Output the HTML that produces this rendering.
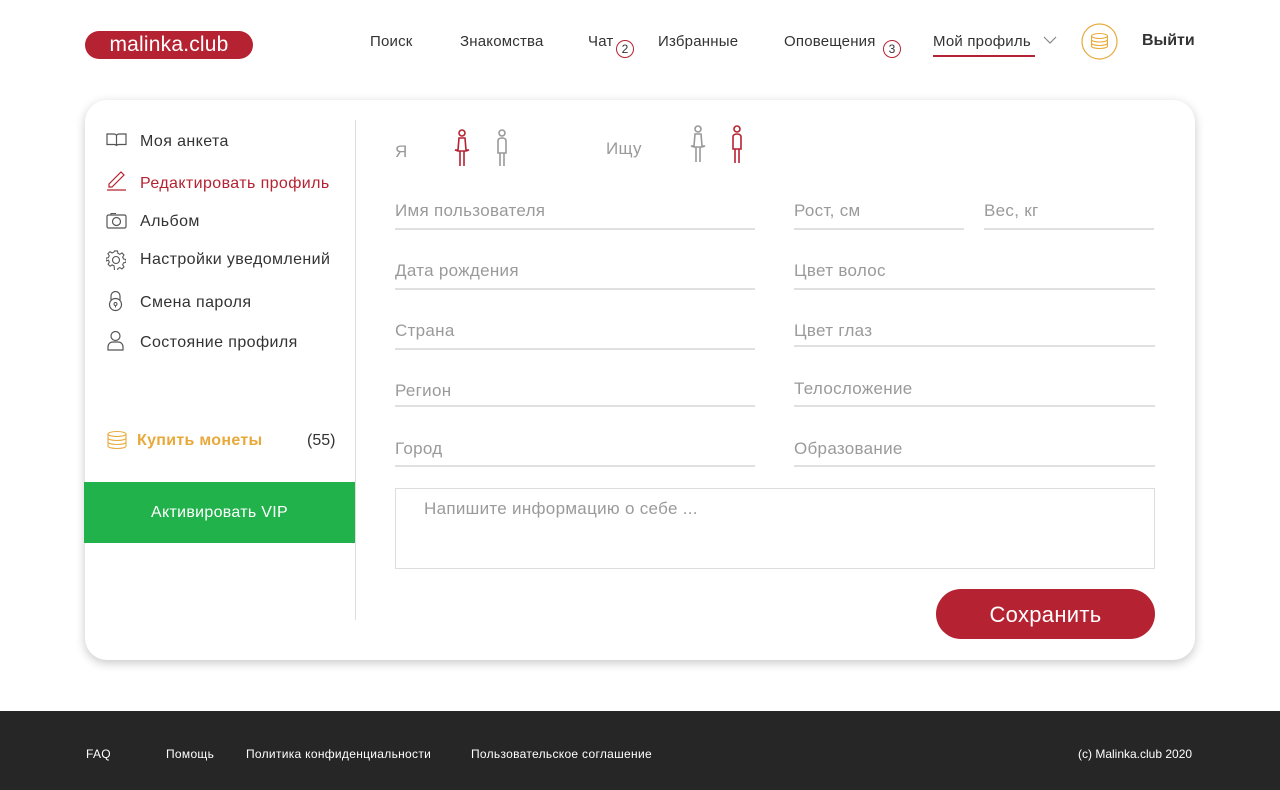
<!DOCTYPE html>
<html><head><meta charset="utf-8"><style>
*{margin:0;padding:0;box-sizing:border-box}
body{width:1280px;height:790px;background:#fff;font-family:"Liberation Sans",sans-serif;position:relative;overflow:hidden;color:#333}
.a{position:absolute;white-space:nowrap}
.nav{font-size:15px;color:#333;top:33px;letter-spacing:0.2px}
.badge{position:absolute;width:18px;height:18px;border:1px solid #b52231;border-radius:50%;font-size:12px;text-align:center;line-height:16px;color:#333}
.card{position:absolute;left:85px;top:100px;width:1110px;height:560px;border-radius:22px;background:#fff;box-shadow:0 3px 10px rgba(0,0,0,.22)}
.mi{font-size:16px;color:#333;letter-spacing:0.4px}
.lbl{font-size:17px;color:#9a9a9a;letter-spacing:0.3px}
.ln{position:absolute;height:2px;background:#e0e0e0}
.ft{font-size:12px;color:#fff;top:747px;letter-spacing:0.3px}
</style></head><body>
<div class="a" style="left:85px;top:31px;width:168px;height:28px;border-radius:14px;background:#b52231;color:#fff;font-size:21px;line-height:27px;text-align:center;letter-spacing:0.2px">malinka.club</div>
<div class="a nav" style="left:370px">Поиск</div>
<div class="a nav" style="left:460px">Знакомства</div>
<div class="a nav" style="left:588px">Чат</div>
<div class="badge" style="left:616px;top:40px">2</div>
<div class="a nav" style="left:658px">Избранные</div>
<div class="a nav" style="left:784px">Оповещения</div>
<div class="badge" style="left:883px;top:40px">3</div>
<div class="a nav" style="left:933px">Мой профиль</div>
<svg class="a" style="left:1043px;top:35px" width="14" height="10"><path d="M1 2l6 6 6-6" fill="none" stroke="#888" stroke-width="1.2"/></svg>
<div class="a" style="left:933px;top:55px;width:102px;height:2px;background:#b52231"></div>
<svg class="a" style="left:1081px;top:23px" width="37" height="37"><circle cx="18.5" cy="18.5" r="17.5" fill="none" stroke="#e8a93a" stroke-width="1.2"/><g fill="none" stroke="#e8a93a" stroke-width="1.1"><ellipse cx="18.5" cy="13" rx="8" ry="2.5"/><path d="M10.5 13v10c0 1.5 3.5 2.5 8 2.5s8-1 8-2.5V13M10.5 16.5c0 1.5 3.5 2.5 8 2.5s8-1 8-2.5M10.5 20c0 1.5 3.5 2.5 8 2.5s8-1 8-2.5"/></g></svg>
<div class="a" style="left:1142px;top:32px;font-size:16px;font-weight:bold;color:#333">Выйти</div>

<div class="card"></div>
<div class="a" style="left:355px;top:120px;width:1px;height:500px;background:#ddd"></div>
<svg class="a" style="left:106px;top:132px" width="22" height="16"><path d="M1 2h7c1.5 0 2.5 1 2.5 2v10c0-1-1-1.5-2.5-1.5H1zM20 2h-7c-1.5 0-2.5 1-2.5 2v10c0-1 1-1.5 2.5-1.5H20z" fill="none" stroke="#555" stroke-width="1.2"/></svg>
<div class="a mi" style="left:140px;top:133px">Моя анкета</div>
<svg class="a" style="left:106px;top:169px" width="22" height="22"><path d="M3 15L15 3l3 3L6 18H3z" fill="none" stroke="#b52231" stroke-width="1.2"/><path d="M1 21h19" stroke="#b52231" stroke-width="1.2"/></svg>
<div class="a mi" style="left:140px;top:175px;color:#b52231">Редактировать профиль</div>
<svg class="a" style="left:106px;top:212px" width="22" height="18"><rect x="1" y="3" width="19" height="13" rx="1.5" fill="none" stroke="#555" stroke-width="1.2"/><circle cx="10.5" cy="9.5" r="4" fill="none" stroke="#555" stroke-width="1.2"/><path d="M5 3V1.5h5" stroke="#555" fill="none"/></svg>
<div class="a mi" style="left:140px;top:213px">Альбом</div>
<svg class="a" style="left:106px;top:250px" width="20" height="20"><circle cx="10" cy="10" r="3.5" fill="none" stroke="#555" stroke-width="1.1"/><path d="M8.5 1h3l.5 2.5 2 1 2.2-1.4 2.1 2.1-1.4 2.2 1 2 2.5.5v3l-2.5.5-1 2 1.4 2.2-2.1 2.1-2.2-1.4-2 1-.5 2.5h-3L8 16.5l-2-1-2.2 1.4-2.1-2.1 1.4-2.2-1-2L-.4 11.5v-3L2 8l1-2-1.4-2.2L3.7 1.7 5.9 3.1 8 2z" fill="none" stroke="#555" stroke-width="1.1" transform="translate(.4 0) scale(.96)"/></svg>
<div class="a mi" style="left:140px;top:251px">Настройки уведомлений</div>
<svg class="a" style="left:107px;top:290px" width="18" height="22"><path d="M4 10V6a4.5 4.5 0 019 0v4" fill="none" stroke="#555" stroke-width="1.2"/><circle cx="8.5" cy="14.5" r="6" fill="none" stroke="#555" stroke-width="1.2"/><circle cx="8.5" cy="14" r="1.5" fill="none" stroke="#555"/><path d="M8.5 15.5v2" stroke="#555"/></svg>
<div class="a mi" style="left:140px;top:294px">Смена пароля</div>
<svg class="a" style="left:107px;top:330px" width="18" height="22"><circle cx="8.5" cy="6" r="4.5" fill="none" stroke="#555" stroke-width="1.2"/><path d="M1 20v-3c0-3 2-5 5-5h5c3 0 5 2 5 5v3z" fill="none" stroke="#555" stroke-width="1.2"/></svg>
<div class="a mi" style="left:140px;top:334px">Состояние профиля</div>
<svg class="a" style="left:106px;top:430px" width="22" height="20"><g fill="none" stroke="#e8a93a" stroke-width="1.1"><ellipse cx="11" cy="4" rx="9" ry="2.5"/><path d="M2 4v12c0 1.5 4 2.5 9 2.5s9-1 9-2.5V4M2 8c0 1.5 4 2.5 9 2.5S20 9.5 20 8M2 12c0 1.5 4 2.5 9 2.5s9-1 9-2.5"/></g></svg>
<div class="a" style="left:137px;top:432px;font-size:16px;font-weight:bold;color:#e8a93a;letter-spacing:0.3px">Купить монеты</div>
<div class="a mi" style="left:307px;top:432px;letter-spacing:0">(55)</div>
<div class="a" style="left:84px;top:482px;width:271px;height:61px;background:#22b24c;color:#fff;font-size:16px;text-align:center;line-height:61px;letter-spacing:0.3px">Активировать VIP</div>

<div class="a lbl" style="left:395px;top:142px">Я</div>
<svg class="a" style="left:452px;top:128px" width="20" height="40"><g fill="none" stroke="#b52231" stroke-width="1.6"><circle cx="10" cy="5" r="3"/><path d="M7 10h6l1 12h3l-3 1H6l-3-1h3l1-12zM8 23v15M12 23v15"/></g></svg>
<svg class="a" style="left:492px;top:128px" width="20" height="40"><g fill="none" stroke="#999" stroke-width="1.6"><circle cx="10" cy="5" r="3"/><path d="M6 13c0-2 1.5-3 4-3s4 1 4 3v12H6zM8 25v13M12 25v13"/></g></svg>
<div class="a lbl" style="left:606px;top:139px">Ищу</div>
<svg class="a" style="left:688px;top:124px" width="20" height="40"><g fill="none" stroke="#999" stroke-width="1.6"><circle cx="10" cy="5" r="3"/><path d="M7 10h6l1 12h3l-3 1H6l-3-1h3l1-12zM8 23v15M12 23v15"/></g></svg>
<svg class="a" style="left:727px;top:124px" width="20" height="42"><g fill="none" stroke="#b52231" stroke-width="1.6"><circle cx="10" cy="5" r="3"/><path d="M6 13c0-2 1.5-3 4-3s4 1 4 3v12H6zM8 25v14M12 25v14"/></g></svg>

<div class="a lbl" style="left:395px;top:201px">Имя пользователя</div><div class="ln" style="left:395px;top:228px;width:360px"></div>
<div class="a lbl" style="left:794px;top:201px">Рост, см</div><div class="ln" style="left:794px;top:228px;width:170px"></div>
<div class="a lbl" style="left:984px;top:201px">Вес, кг</div><div class="ln" style="left:984px;top:228px;width:170px"></div>
<div class="a lbl" style="left:395px;top:261px">Дата рождения</div><div class="ln" style="left:395px;top:288px;width:360px"></div>
<div class="a lbl" style="left:794px;top:261px">Цвет волос</div><div class="ln" style="left:794px;top:288px;width:361px"></div>
<div class="a lbl" style="left:395px;top:321px">Страна</div><div class="ln" style="left:395px;top:348px;width:360px"></div>
<div class="a lbl" style="left:794px;top:321px">Цвет глаз</div><div class="ln" style="left:794px;top:345px;width:361px"></div>
<div class="a lbl" style="left:395px;top:381px">Регион</div><div class="ln" style="left:395px;top:405px;width:360px"></div>
<div class="a lbl" style="left:794px;top:379px">Телосложение</div><div class="ln" style="left:794px;top:405px;width:361px"></div>
<div class="a lbl" style="left:395px;top:439px">Город</div><div class="ln" style="left:395px;top:465px;width:360px"></div>
<div class="a lbl" style="left:794px;top:439px">Образование</div><div class="ln" style="left:794px;top:465px;width:361px"></div>
<div class="a" style="left:395px;top:488px;width:760px;height:81px;border:1px solid #ddd"></div>
<div class="a lbl" style="left:424px;top:499px">Напишите информацию о себе ...</div>
<div class="a" style="left:936px;top:589px;width:219px;height:50px;border-radius:25px;background:#b52231;color:#fff;font-size:22px;text-align:center;line-height:51px;letter-spacing:0.3px">Сохранить</div>

<div class="a" style="left:0;top:711px;width:1280px;height:79px;background:#262626"></div>
<div class="a ft" style="left:86px">FAQ</div>
<div class="a ft" style="left:166px">Помощь</div>
<div class="a ft" style="left:246px">Политика конфиденциальности</div>
<div class="a ft" style="left:471px">Пользовательское соглашение</div>
<div class="a ft" style="left:1078px;letter-spacing:0">(c) Malinka.club 2020</div>
</body></html>
